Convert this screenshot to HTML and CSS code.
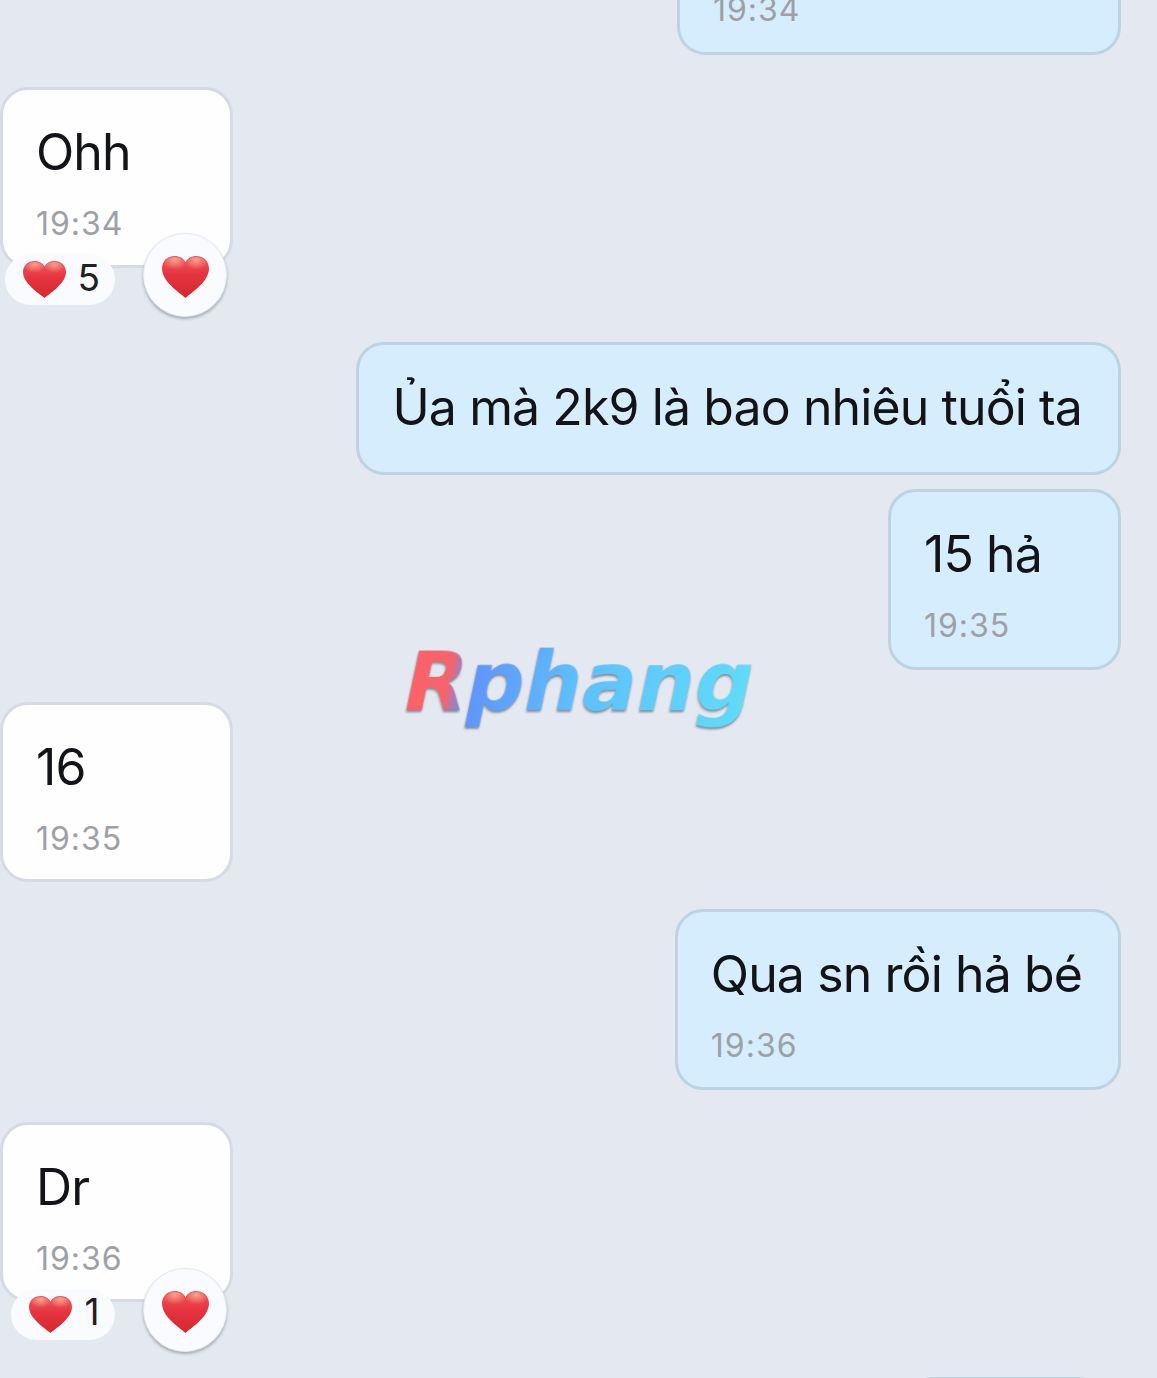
FILE: index.html
```html
<!DOCTYPE html>
<html lang="vi">
<head>
    <meta charset="UTF-8">
    <meta name="viewport" content="width=device-width, initial-scale=1.0">
    <title>Tin nhắn</title>
    <link rel="stylesheet" href="styles.css">
</head>
<body>

    <svg class="defs" width="0" height="0">
        <defs>
            <linearGradient id="heartFill" x1="0" y1="0" x2="0" y2="1">
                <stop offset="0" stop-color="#ef5a5c"/>
                <stop offset="0.45" stop-color="#e5343f"/>
                <stop offset="1" stop-color="#d4282f"/>
            </linearGradient>
            <radialGradient id="heartShine" cx="0.5" cy="0.15" r="0.6">
                <stop offset="0" stop-color="#f9a48f" stop-opacity="0.95"/>
                <stop offset="1" stop-color="#f9a48f" stop-opacity="0"/>
            </radialGradient>
            <symbol id="heart" viewBox="0 0 44 40" preserveAspectRatio="none">
                <path fill="url(#heartFill)" d="M22 40C15 34 0 24 0 12 0 5 5 0 12 0c4.500 0 8 2 10 6 2-4 5.500-6 10-6 7 0 12 5 12 12 0 12-15 22-22 28z"/>
                <ellipse cx="12" cy="9" rx="10" ry="8" fill="url(#heartShine)"/>
                <ellipse cx="32" cy="9" rx="10" ry="8" fill="url(#heartShine)"/>
            </symbol>
        </defs>
    </svg>

    <div class="chat">
        <div class="msg me cut">
            <div class="bubble"><div class="time">19:34</div></div>
        </div>

        <div class="msg them gap-first">
            <div class="bubble">
                <div class="text">Ohh</div>
                <div class="time">19:34</div>
            </div>
            <div class="reactions">
                <div class="pill"><svg class="heart"><use href="#heart"/></svg><span>5</span></div>
                <div class="react-btn"><svg class="heart-big"><use href="#heart"/></svg></div>
            </div>
        </div>

        <div class="msg me gap-react">
            <div class="bubble only-text"><div class="text">Ủa mà 2k9 là bao nhiêu tuổi ta</div></div>
        </div>

        <div class="msg me gap-small">
            <div class="bubble">
                <div class="text">15 hả</div>
                <div class="time">19:35</div>
            </div>
        </div>

        <div class="msg them gap-big">
            <div class="bubble">
                <div class="text">16</div>
                <div class="time">19:35</div>
            </div>
        </div>

        <div class="msg me gap-mid">
            <div class="bubble">
                <div class="text">Qua sn rồi hả bé</div>
                <div class="time">19:36</div>
            </div>
        </div>

        <div class="msg them gap-big">
            <div class="bubble">
                <div class="text">Dr</div>
                <div class="time">19:36</div>
            </div>
            <div class="reactions">
                <div class="pill"><svg class="heart"><use href="#heart"/></svg><span>1</span></div>
                <div class="react-btn"><svg class="heart-big"><use href="#heart"/></svg></div>
            </div>
        </div>

        <div class="msg me gap-react">
            <div class="bubble last"></div>
        </div>
    </div>

    <!-- logo chen len anh -->
    <div class="watermark">Rphang</div>

</body>
</html>
```

FILE: styles.css
```css
* {
    box-sizing: border-box;
    margin: 0;
    padding: 0;
}

html, body {
    height: 100%;
    overflow: hidden;
}

body {
    position: relative;
    background: #e3e8f1;
    font-family: 'Inter', 'Liberation Sans', sans-serif;
}

.defs {
    position: absolute;
}

.chat {
    display: flex;
    flex-direction: column;
    padding-right: 36px;
}

.msg {
    display: flex;
    flex-direction: column;
}

.me {
    align-items: flex-end;
}

.them {
    align-items: flex-start;
}

/* Khoang cach giua cac tin */
.gap-small { margin-top: 14px; }
.gap-mid { margin-top: 27px; }
.gap-big { margin-top: 32px; }
.gap-first { margin-top: 32px; }
.gap-react { margin-top: 25px; }

/* Bong chat */
.bubble {
    min-width: 233px;
    padding: 29px 36px 18.5px 33px;
    border: 3px solid #d6dbe3;
    border-radius: 28px;
    background: #fefefe;
}

.me .bubble {
    border-color: #bdd3e1;
    background: #d5edfc;
}

.only-text {
    padding-bottom: 32px;
}

.text {
    font-size: 50px;
    line-height: 66px;
    letter-spacing: -0.9px;
    color: #121417;
    white-space: nowrap;
}

.time {
    margin-top: 17px;
    font-size: 32px;
    line-height: 44px;
    letter-spacing: 1px;
    color: #9da1a6;
}

.cut .bubble {
    width: 444px;
    height: 55px;
    padding-top: 0;
    border-top: none;
    border-radius: 0 0 28px 28px;
}

.cut .time {
    margin-top: -12px;
}

.last {
    width: 198px;
    min-width: 0;
    height: 40px;
    margin-right: 16px;
}

/* Tha tim */
.reactions {
    display: flex;
    justify-content: flex-end;
    gap: 28px;
    width: 233px;
    height: 84px;
    margin-top: -34.5px;
    padding-right: 6px;
}

.pill {
    display: flex;
    align-items: center;
    justify-content: center;
    gap: 12px;
    min-width: 104px;
    height: 51px;
    margin-top: 21px;
    padding: 0 15px 0 18px;
    border-radius: 26px;
    background: #f9fbff;
    font-size: 37px;
    color: #1d2024;
}

.pill span {
    margin-top: -5px;
}

.heart {
    width: 43px;
    height: 37px;
}

.react-btn {
    display: flex;
    align-items: center;
    justify-content: center;
    width: 84px;
    height: 84px;
    border: 1px solid #e6e9ef;
    border-radius: 50%;
    background: #f9fbff;
    box-shadow: 0 2px 3px rgba(90, 95, 105, 0.45);
}

.heart-big {
    width: 47px;
    height: 42px;
    margin-top: 4px;
}

/* Logo */
.watermark {
    position: absolute;
    left: 405px;
    top: 630px;
    font-family: 'DejaVu Sans', sans-serif;
    font-size: 81px;
    font-weight: 700;
    line-height: 104px;
    letter-spacing: 0.2px;
    background: linear-gradient(to right, #fb6168 0, #f8636a 12%, #5f93fb 18%, #5fc0fb 50%, #60dcf8 100%);
    -webkit-background-clip: text;
    background-clip: text;
    color: transparent;
    filter: drop-shadow(0 2px 1px rgba(90, 95, 110, 0.7)) blur(0.6px);
    transform: skewX(-12deg);
}
```
